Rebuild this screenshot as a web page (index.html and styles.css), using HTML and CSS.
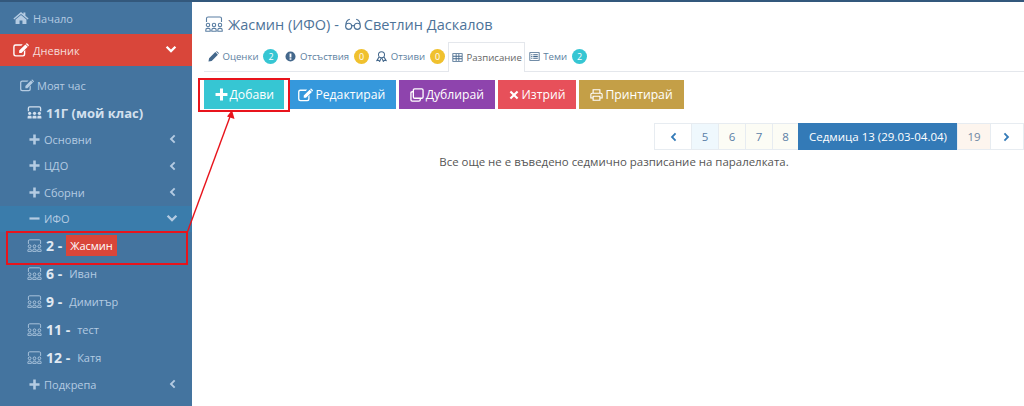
FILE: index.html
```html
<!DOCTYPE html>
<html lang="bg">
<head>
  <meta charset="UTF-8">
  <title>Разписание</title>
  <link rel="stylesheet" href="styles.css">
</head>
<body>
  <svg class="defs" width="0" height="0">
    <symbol id="i-home" viewBox="0 0 20 16"><path d="M10 0.5 L13 3 V1.2 H15.5 V5.1 L19.5 8.5 L18.4 9.8 L10 2.9 L1.6 9.8 L0.5 8.5 Z M10 4.2 L16.8 9.8 V15.5 H11.8 V11 H8.2 V15.5 H3.2 V9.8 Z"/></symbol>
    <symbol id="i-edit" viewBox="0 0 18 16"><path d="M2.8 1.5 H11 L9.4 3.1 H3 Q1.7 3.1 1.7 4.4 V12.6 Q1.7 13.9 3 13.9 H11 Q12.3 13.9 12.3 12.6 V9.5 L13.9 7.9 V12.8 Q13.9 15.5 11.2 15.5 H2.8 Q0.1 15.5 0.1 12.8 V4.2 Q0.1 1.5 2.8 1.5 Z M14 1.6 L16.7 4.3 L9.6 11.4 H6.9 V8.7 Z M15 0.6 Q15.6 0 16.2 0.6 L17.7 2.1 Q18.2 2.7 17.7 3.3 L17.3 3.7 L14.5 1 Z"/></symbol>
    <symbol id="i-group" viewBox="0 0 18 16"><path fill="none" stroke="currentColor" stroke-width="1.1" d="M1.5 6 V2.6 Q1.5 1 3.1 1 H14.9 Q16.5 1 16.5 2.6 V6"/><path fill="none" stroke="currentColor" stroke-width="1.1" d="M0.8 15.2 V14 Q0.8 12.4 2.4 12.4 H3.6 Q5.2 12.4 5.2 14 V15.2 Z M6.8 15.2 V14 Q6.8 12.4 8.4 12.4 H9.6 Q11.2 12.4 11.2 14 V15.2 Z M12.8 15.2 V14 Q12.8 12.4 14.4 12.4 H15.6 Q17.2 12.4 17.2 14 V15.2 Z"/><circle cx="3" cy="9" r="1.7" fill="none" stroke="currentColor" stroke-width="1.1"/><circle cx="9" cy="9" r="1.7" fill="none" stroke="currentColor" stroke-width="1.1"/><circle cx="15" cy="9" r="1.7" fill="none" stroke="currentColor" stroke-width="1.1"/></symbol>
    <symbol id="i-group-solid" viewBox="0 0 18 16"><path fill="none" stroke="currentColor" stroke-width="1.6" d="M1.5 6.5 V2.6 Q1.5 1 3.1 1 H14.9 Q16.5 1 16.5 2.6 V6.5"/><circle cx="3" cy="9" r="2"/><circle cx="9" cy="9" r="2"/><circle cx="15" cy="9" r="2"/><path d="M0.5 15.5 V13.4 Q0.5 12 2 12 H4 Q5.5 12 5.5 13.4 V15.5 Z M6.5 15.5 V13.4 Q6.5 12 8 12 H10 Q11.5 12 11.5 13.4 V15.5 Z M12.5 15.5 V13.4 Q12.5 12 14 12 H16 Q17.5 12 17.5 13.4 V15.5 Z"/></symbol>
    <symbol id="i-plus" viewBox="0 0 12 12"><path d="M4.6 0.5 H7.4 V4.6 H11.5 V7.4 H7.4 V11.5 H4.6 V7.4 H0.5 V4.6 H4.6 Z"/></symbol>
    <symbol id="i-minus" viewBox="0 0 12 12"><path d="M0.5 4.8 H11.5 V7.2 H0.5 Z"/></symbol>
    <symbol id="i-left" viewBox="0 0 10 12"><path d="M7.4 0.8 L9 2.4 L5.4 6 L9 9.6 L7.4 11.2 L2.2 6 Z"/></symbol>
    <symbol id="i-right" viewBox="0 0 10 12"><path d="M2.6 0.8 L1 2.4 L4.6 6 L1 9.6 L2.6 11.2 L7.8 6 Z"/></symbol>
    <symbol id="i-down" viewBox="0 0 12 10"><path d="M0.8 2.6 L2.4 1 L6 4.6 L9.6 1 L11.2 2.6 L6 7.8 Z"/></symbol>
    <symbol id="i-pencil" viewBox="0 0 12 12"><path d="M0.5 11.5 L1.2 8 L8 1.2 L10.8 4 L4 10.8 Z M8.8 0.5 Q9.4 0 10 0.5 L11.5 2 Q12 2.6 11.5 3.2 L11.4 3.3 L8.7 0.6 Z"/></symbol>
    <symbol id="i-alert" viewBox="0 0 12 12"><path fill-rule="evenodd" d="M6 0.5 A5.5 5.5 0 1 0 6 11.5 A5.5 5.5 0 1 0 6 0.5 Z M5 2.6 H7 V7 H5 Z M5 8 H7 V9.6 H5 Z"/></symbol>
    <symbol id="i-award" viewBox="0 0 12 12"><path fill="none" stroke="currentColor" stroke-width="1.1" d="M6 0.8 A3.3 3.3 0 1 0 6 7.4 A3.3 3.3 0 1 0 6 0.8 Z M3.4 6.4 L1 10.4 L3 10.2 L4 11.4 L5.6 7.6 M8.6 6.4 L11 10.4 L9 10.2 L8 11.4 L6.4 7.6"/></symbol>
    <symbol id="i-table" viewBox="0 0 13 12"><path fill-rule="evenodd" d="M0.5 1 H12.5 V11 H0.5 Z M1.5 2 V4 H4.4 V2 Z M5.4 2 V4 H7.6 V2 Z M8.6 2 V4 H11.5 V2 Z M1.5 5 V7 H4.4 V5 Z M5.4 5 V7 H7.6 V5 Z M8.6 5 V7 H11.5 V5 Z M1.5 8 V10 H4.4 V8 Z M5.4 8 V10 H7.6 V8 Z M8.6 8 V10 H11.5 V8 Z"/></symbol>
    <symbol id="i-list" viewBox="0 0 13 12"><path fill-rule="evenodd" d="M0.5 1 H12.5 V11 H0.5 Z M1.5 2 V10 H11.5 V2 Z M2.6 3.4 H4 V4.6 H2.6 Z M5 3.4 H10.4 V4.6 H5 Z M2.6 5.4 H4 V6.6 H2.6 Z M5 5.4 H10.4 V6.6 H5 Z M2.6 7.4 H4 V8.6 H2.6 Z M5 7.4 H10.4 V8.6 H5 Z"/></symbol>
    <symbol id="i-copy" viewBox="0 0 15 15"><path fill="none" stroke="currentColor" stroke-width="1.4" d="M5 1 H12.6 Q14 1 14 2.4 V9.6 Q14 11 12.6 11 H5 Q3.6 11 3.6 9.6 V2.4 Q3.6 1 5 1 Z M3.6 4 H2.4 Q1 4 1 5.4 V12.6 Q1 14 2.4 14 H9.6 Q11 14 11 12.6 V11"/></symbol>
    <symbol id="i-times" viewBox="0 0 12 12"><path d="M2.6 0.8 L6 4.2 L9.4 0.8 L11.2 2.6 L7.8 6 L11.2 9.4 L9.4 11.2 L6 7.8 L2.6 11.2 L0.8 9.4 L4.2 6 L0.8 2.6 Z"/></symbol>
    <symbol id="i-print" viewBox="0 0 15 14"><path fill="none" stroke="currentColor" stroke-width="1.3" d="M3.6 5 V1 H11.4 V5 M3.6 10.5 H1 V6.4 Q1 5 2.4 5 H12.6 Q14 5 14 6.4 V10.5 H11.4 M3.6 8.5 H11.4 V13 H3.6 Z"/></symbol>
    <symbol id="i-glasses" viewBox="0 0 20 14"><path fill="none" stroke="currentColor" stroke-width="1.3" d="M1.8 9 A3.4 3.4 0 1 0 8.6 9 A3.4 3.4 0 1 0 1.8 9 Z M11.4 9 A3.4 3.4 0 1 0 18.2 9 A3.4 3.4 0 1 0 11.4 9 Z M8.6 8.6 Q10 7.8 11.4 8.6 M1.8 9 Q2 2 6.5 1.2 M18.2 9 Q18 2 13.5 1.2"/></symbol>
  </svg>

  <div class="page">
    <aside class="sidebar">
      <a class="nav-top">
        <svg class="ico-top"><use href="#i-home"/></svg>Начало
      </a>
      <a class="nav-top nav-open">
        <svg class="ico-top"><use href="#i-edit"/></svg>Дневник
        <svg class="chev"><use href="#i-down"/></svg>
      </a>
      <div class="sub">
        <a class="nav-hour"><svg class="ico-top"><use href="#i-edit"/></svg>Моят час</a>
        <a class="nav-class"><svg class="ico-group"><use href="#i-group-solid"/></svg>11Г (мой клас)</a>
        <a class="nav-item"><svg class="ico-plus"><use href="#i-plus"/></svg>Основни<svg class="chev chev-left"><use href="#i-left"/></svg></a>
        <a class="nav-item"><svg class="ico-plus"><use href="#i-plus"/></svg>ЦДО<svg class="chev chev-left"><use href="#i-left"/></svg></a>
        <a class="nav-item"><svg class="ico-plus"><use href="#i-plus"/></svg>Сборни<svg class="chev chev-left"><use href="#i-left"/></svg></a>
        <a class="nav-item nav-active"><svg class="ico-plus"><use href="#i-minus"/></svg>ИФО<svg class="chev"><use href="#i-down"/></svg></a>
        <a class="nav-group nav-first"><svg class="ico-group"><use href="#i-group"/></svg><b>2 -</b><span class="tag">Жасмин</span></a>
        <a class="nav-group"><svg class="ico-group"><use href="#i-group"/></svg><b>6 -</b><span class="name">Иван</span></a>
        <a class="nav-group"><svg class="ico-group"><use href="#i-group"/></svg><b>9 -</b><span class="name">Димитър</span></a>
        <a class="nav-group"><svg class="ico-group"><use href="#i-group"/></svg><b>11 -</b><span class="name">тест</span></a>
        <a class="nav-group"><svg class="ico-group"><use href="#i-group"/></svg><b>12 -</b><span class="name">Катя</span></a>
        <a class="nav-item"><svg class="ico-plus"><use href="#i-plus"/></svg>Подкрепа<svg class="chev chev-left"><use href="#i-left"/></svg></a>
      </div>
    </aside>

    <main class="content">
      <h1 class="title">
        <svg class="ico-title"><use href="#i-group"/></svg><span>Жасмин (ИФО) -</span><svg class="ico-glasses"><use href="#i-glasses"/></svg><span>Светлин Даскалов</span>
      </h1>

      <ul class="tabs">
        <li><svg class="ico-tab"><use href="#i-pencil"/></svg>Оценки<span class="badge badge-teal">2</span></li>
        <li><svg class="ico-tab"><use href="#i-alert"/></svg>Отсъствия<span class="badge badge-yellow">0</span></li>
        <li><svg class="ico-tab"><use href="#i-award"/></svg>Отзиви<span class="badge badge-yellow">0</span></li>
        <li class="tab-active"><svg class="ico-tab"><use href="#i-table"/></svg>Разписание</li>
        <li><svg class="ico-tab"><use href="#i-list"/></svg>Теми<span class="badge badge-teal">2</span></li>
      </ul>

      <div class="actions">
        <a class="btn btn-add"><svg class="ico-btn"><use href="#i-plus"/></svg>Добави</a>
        <a class="btn btn-edit"><svg class="ico-btn"><use href="#i-edit"/></svg>Редактирай</a>
        <a class="btn btn-copy"><svg class="ico-btn"><use href="#i-copy"/></svg>Дублирай</a>
        <a class="btn btn-del"><svg class="ico-btn"><use href="#i-times"/></svg>Изтрий</a>
        <a class="btn btn-print"><svg class="ico-btn"><use href="#i-print"/></svg>Принтирай</a>
      </div>

      <div class="pager">
        <a class="pg pg-arrow pg-prev"><svg><use href="#i-left"/></svg></a>
        <a class="pg pg-blue">5</a>
        <a class="pg pg-cream">6</a>
        <a class="pg pg-cream">7</a>
        <a class="pg pg-cream pg-narrow">8</a>
        <a class="pg pg-current">Седмица 13 (29.03-04.04)</a>
        <a class="pg pg-peach">19</a>
        <a class="pg pg-arrow pg-next"><svg><use href="#i-right"/></svg></a>
      </div>

      <p class="empty">Все още не е въведено седмично разписание на паралелката.</p>
    </main>
  </div>

  <!-- red annotation drawn over the screenshot -->
  <div class="mark mark-row"></div>
  <div class="mark mark-btn"></div>
  <svg class="arrow" width="1024" height="406">
    <path d="M187 233 L231 114" fill="none" stroke="#e8141c" stroke-width="1.4"/>
    <path d="M232 110 L234.5 119 L227 116.5 Z" fill="#e8141c"/>
  </svg>
</body>
</html>
```

FILE: styles.css
```css
* {
  box-sizing: border-box;
}

html, body {
  margin: 0;
  height: 406px;
  overflow: hidden;
}

body {
  font-family: "Open Sans", sans-serif;
  background: #fff;
  color: #555;
  position: relative;
}

.defs {
  position: absolute;
}

.page {
  display: flex;
  height: 406px;
  border-top: 2px solid #33587c;
}

/* sidebar */
.sidebar {
  width: 192px;
  flex: none;
  background: #44749f;
  color: #b4cbe2;
  font-size: 11px;
}

.sidebar a {
  display: flex;
  align-items: center;
  position: relative;
}

.sidebar svg {
  fill: currentColor;
  flex: none;
}

.nav-top {
  height: 32px;
  padding-left: 13px;
}

.nav-open {
  background: #d9463a;
  color: #f6dcd9;
}

.ico-top {
  width: 16px;
  height: 14px;
  margin-right: 4px;
}

.nav-open .ico-top,
.nav-open .chev {
  color: #fff;
}

.chev {
  position: absolute;
  right: 14px;
  top: 50%;
  width: 12px;
  height: 10px;
  margin-top: -5px;
}

.nav-open .chev {
  right: 15px;
}

.sub {
  padding-top: 6px;
}

.nav-hour {
  height: 27px;
  padding-left: 20px;
}

.nav-hour .ico-top {
  width: 14px;
  height: 13px;
  margin-right: 3px;
}

.nav-class {
  height: 27px;
  padding-left: 27px;
  font-weight: 700;
  font-size: 13px;
  color: #d3e0ee;
}

.ico-group {
  width: 15px;
  height: 13px;
  margin-right: 4px;
}

.nav-item {
  height: 26.5px;
  padding-left: 29px;
}

.ico-plus {
  width: 11px;
  height: 11px;
  margin-right: 4px;
}

.nav-active {
  background: #3a7cab;
}

.nav-group {
  height: 28px;
  padding-left: 27px;
}

.nav-group b {
  font-size: 14px;
  color: #e0e9f2;
}

.name {
  margin-left: 7px;
}

.nav-first {
  height: 27px;
}

.tag {
  background: #d9463a;
  color: #fff;
  font-size: 11px;
  padding: 3px 4px;
  margin-left: 4px;
  line-height: 15px;
}

/* content */
.content {
  flex: 1;
  min-width: 0;
  padding-left: 12px;
}

.title {
  margin: 8px 0 4px;
  height: 28px;
  font-size: 14.5px;
  font-weight: 400;
  color: #4d7399;
  display: flex;
  align-items: center;
}

.ico-title {
  width: 18px;
  height: 16px;
  margin: 0 5px 0 1px;
  color: #5b7fa3;
}

.ico-glasses {
  width: 18px;
  height: 13px;
  margin: 0 2px 0 5px;
}

.tabs {
  list-style: none;
  display: flex;
  margin: 0 0 8px;
  padding: 0;
  height: 30px;
  border-bottom: 1px solid #e4e7ec;
  font-size: 9.6px;
  color: #5d7f9f;
}

.tabs li {
  display: flex;
  align-items: center;
  padding: 0 3px 0 4px;
}

.tabs .tab-active {
  height: 30px;
  background: #fff;
  border: 1px solid #e4e7ec;
  border-bottom: none;
  color: #666;
  padding: 0 2px 0 3px;
}

.ico-tab {
  width: 11px;
  height: 11px;
  margin-right: 3.5px;
  fill: currentColor;
  color: #44688c;
}

.badge {
  width: 15px;
  height: 15px;
  border-radius: 50%;
  margin-left: 5px;
  font-size: 9px;
  color: #fff;
  display: flex;
  align-items: center;
  justify-content: center;
}

.badge-teal {
  background: #36c6d3;
}

.badge-yellow {
  background: #f0c12e;
}

.actions {
  display: flex;
  gap: 3.5px;
  height: 29px;
}

.btn {
  display: flex;
  align-items: center;
  padding: 0 10.5px;
  color: #fff;
  font-size: 12.2px;
  white-space: nowrap;
}

.ico-btn {
  width: 14px;
  height: 14px;
  margin-right: 2px;
  fill: currentColor;
}

.btn-add {
  background: #36c6d3;
}

.btn-add .ico-btn {
  width: 13px;
  height: 13px;
}

.btn-edit {
  background: #3598dc;
  padding: 0 10.5px;
}

.btn-edit .ico-btn {
  width: 15px;
}

.btn-copy {
  background: #8e44ad;
}

.btn-del {
  background: #e7505a;
}

.btn-del .ico-btn {
  width: 10px;
  height: 10px;
  margin-right: 3px;
}

.btn-print {
  background: #c49f47;
  padding: 0 11px;
}

.btn-print .ico-btn {
  width: 13px;
  margin-right: 2px;
}

.pager {
  display: flex;
  justify-content: flex-end;
  margin-top: 14px;
  height: 27px;
  font-size: 11.5px;
}

.pg {
  height: 27px;
  display: flex;
  align-items: center;
  justify-content: center;
  border: 1px solid #e7ecf1;
  margin-left: -1px;
  color: #5a7ea6;
}

.pg-arrow {
  color: #337ab7;
}

.pg-arrow svg {
  width: 8px;
  height: 10px;
  fill: currentColor;
}

.pg-prev {
  width: 38px;
}

.pg-next {
  width: 34px;
}

.pg-blue,
.pg-cream {
  width: 28px;
}

.pg-narrow {
  width: 27px;
}

.pg-blue {
  background: #eff8fd;
}

.pg-cream {
  background: #fcfcf5;
}

.pg-peach {
  width: 34px;
  background: #fdf5ee;
  color: #6f87a3;
}

.pg-current {
  width: 160px;
  background: #337ab7;
  border-color: #337ab7;
  color: #fff;
}

.empty {
  margin: 4px 0 0;
  text-align: center;
  font-size: 11.45px;
  color: #555;
}

/* annotation */
.mark {
  position: absolute;
  border: 2px solid #e8141c;
}

.mark-row {
  left: 6px;
  top: 231px;
  width: 182px;
  height: 34px;
}

.mark-btn {
  left: 198px;
  top: 78px;
  width: 92px;
  height: 34px;
}

.arrow {
  position: absolute;
  left: 0;
  top: 0;
  pointer-events: none;
}
```
